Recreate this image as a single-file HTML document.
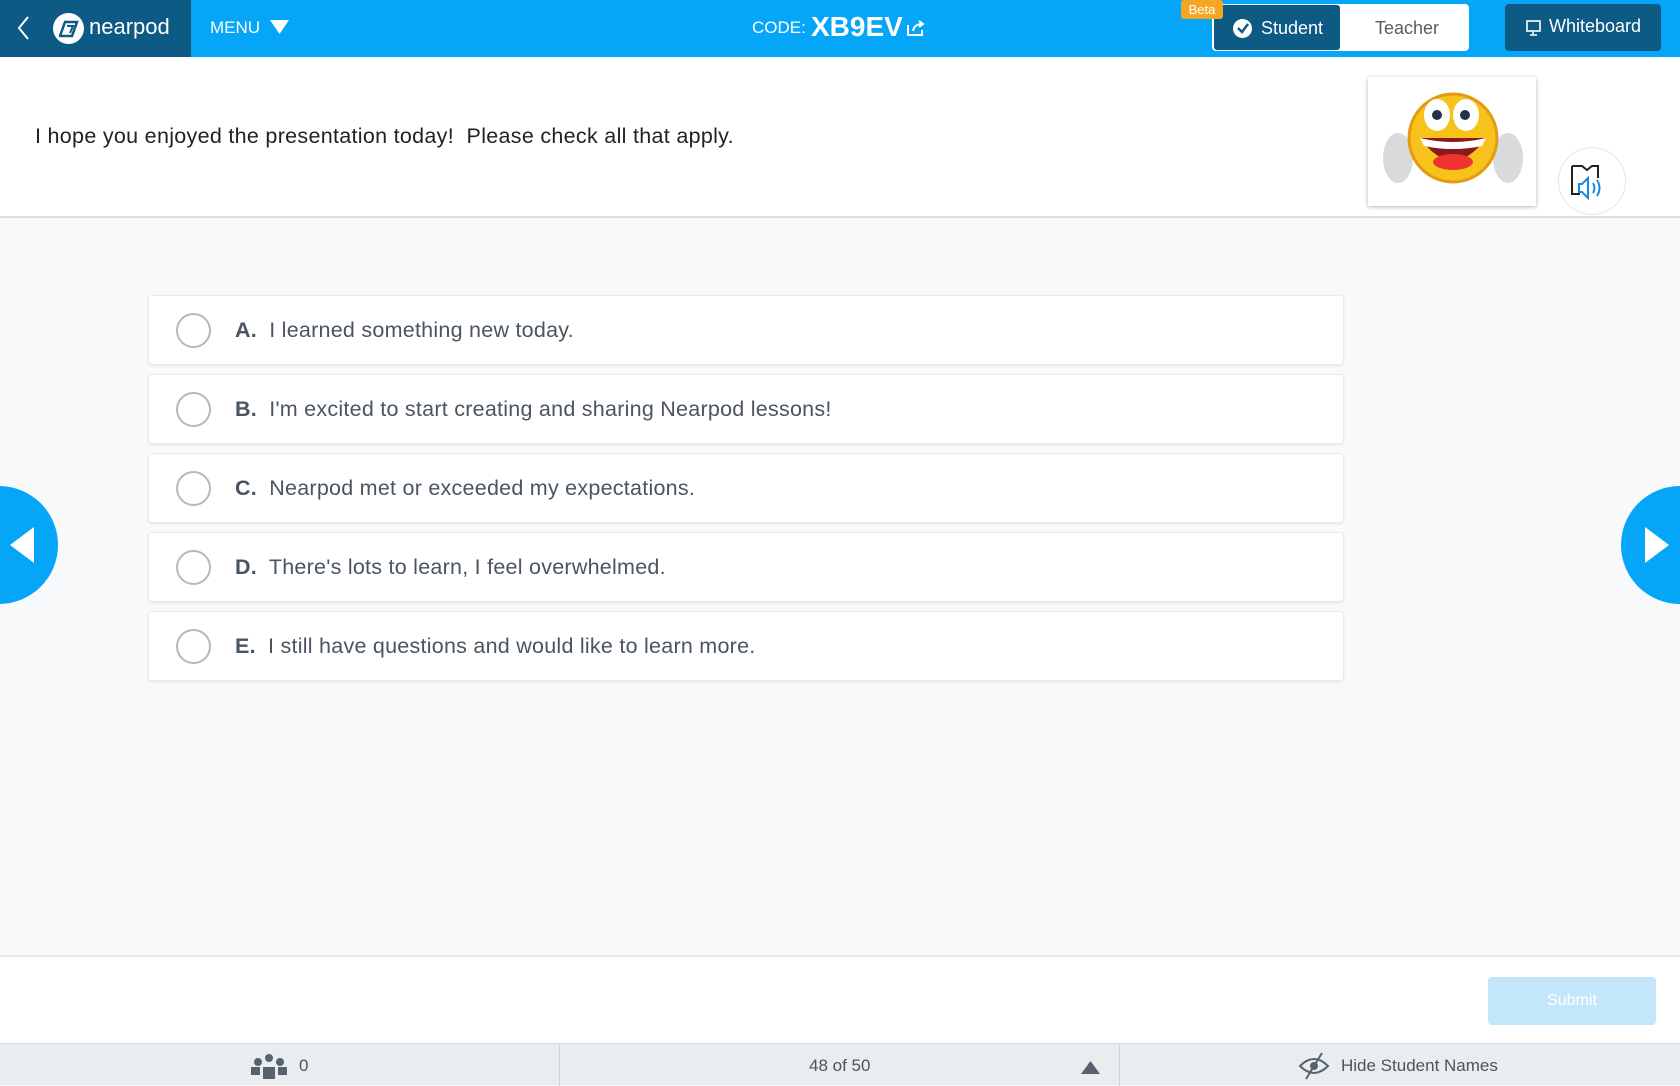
<!DOCTYPE html><html><head><style>
*{box-sizing:border-box;margin:0;padding:0}
body{width:1680px;height:1085px;overflow:hidden;background:#f7f9fb;font-family:"Liberation Sans",sans-serif;position:relative;color:#4a5560}
.hdr{position:absolute;left:0;top:0;width:1680px;height:57px;background:#05a6f8}
.logo{position:absolute;left:0;top:0;width:191px;height:57px;background:#0d5a85;color:#fff}
.abs{position:absolute}
.q{position:absolute;left:0;top:57px;width:1680px;height:161px;background:#fff;border-bottom:2px solid #dde1e5}
.opt{position:absolute;left:148px;width:1196px;height:70px;background:#fff;border:1px solid #e8ebee;border-radius:4px;box-shadow:0 1px 2px rgba(0,0,0,.08)}
.opt .c{position:absolute;left:27px;top:17px;width:35px;height:35px;border:2px solid #b4b8bc;border-radius:50%}
.opt .t{position:absolute;left:86px;top:22px;font-size:21.5px;letter-spacing:0.25px;color:#4a5560}
.opt b{color:#4a5560;margin-right:6px}
.bar{position:absolute;left:0;top:1043px;width:1680px;height:42px;background:#e9edf0;border-top:1px solid #d5d9dd;font-size:17px;color:#4a5560}
</style></head><body>
<div class="hdr"></div>
<div class="logo">
 <svg class="abs" style="left:16px;top:15px" width="16" height="26"><path d="M12 2 L3 13 L12 24" stroke="#fff" stroke-width="2" fill="none"/></svg>
 <div class="abs" style="left:53px;top:13px;width:31px;height:31px;border-radius:50%;background:#fff"></div>
 <svg class="abs" style="left:59px;top:20px" width="20" height="18"><path d="M6 2h12l-5 14H1z" stroke="#0d5a85" stroke-width="2.5" fill="none"/><path d="M8 6h6l-3 7" stroke="#0d5a85" stroke-width="2" fill="none"/></svg>
 <div class="abs" style="left:89px;top:14px;font-size:22px;">nearpod</div>
</div>
<div class="abs" style="left:210px;top:18px;color:#fff;font-size:17px">MENU</div>
<svg class="abs" style="left:270px;top:20px" width="20" height="15"><path d="M0 0h19L9.5 14z" fill="#fff"/></svg>
<div class="abs" style="left:752px;top:18px;color:#fff;font-size:17px">CODE:</div>
<div class="abs" style="left:811px;top:11px;color:#fff;font-size:28px;font-weight:bold">XB9EV</div>
<svg class="abs" style="left:906px;top:19px" width="20" height="18"><path d="M2 6v10h14v-5" stroke="#fff" stroke-width="2" fill="none"/><path d="M7 12c1-5 4-7 9-7M13 2l4 3-4 3" stroke="#fff" stroke-width="2" fill="none"/></svg>
<div class="abs" style="left:1212px;top:4px;width:257px;height:47px;background:#fff;border-radius:4px"></div>
<div class="abs" style="left:1214px;top:5px;width:126px;height:45px;background:#0d5a85;border-radius:3px"></div>
<div class="abs" style="left:1233px;top:19px;width:19px;height:19px;border-radius:50%;background:#fff"></div>
<svg class="abs" style="left:1237px;top:23px" width="12" height="11"><path d="M1 5l4 4 6-8" stroke="#0d5a85" stroke-width="2.5" fill="none"/></svg>
<div class="abs" style="left:1261px;top:18px;color:#fff;font-size:18px">Student</div>
<div class="abs" style="left:1375px;top:18px;color:#555d65;font-size:18px">Teacher</div>
<div class="abs" style="left:1181px;top:0;width:42px;height:19px;background:#f5a623;border-radius:3px;color:#fff;font-size:13px;text-align:center;line-height:19px">Beta</div>
<div class="abs" style="left:1505px;top:4px;width:156px;height:47px;background:#0d5a85;border-radius:4px"></div>
<svg class="abs" style="left:1526px;top:20px" width="16" height="16"><rect x="1" y="1" width="13" height="10" stroke="#fff" stroke-width="1.6" fill="none"/><path d="M7 11v4M4 15h7" stroke="#fff" stroke-width="1.5"/></svg>
<div class="abs" style="left:1549px;top:16px;color:#fff;font-size:18px">Whiteboard</div>

<div class="q"></div>
<div class="abs" style="left:35px;top:124px;font-size:21.5px;letter-spacing:0.3px;color:#222">I hope you enjoyed the presentation today!&nbsp; Please check all that apply.</div>
<div class="abs" style="left:1368px;top:77px;width:168px;height:129px;background:#fff;box-shadow:0 1px 4px rgba(0,0,0,.3)"></div>
<svg class="abs" style="left:1378px;top:88px" width="150" height="110">
<ellipse cx="20" cy="70" rx="15" ry="25" fill="#d8dadc"/><ellipse cx="130" cy="70" rx="15" ry="25" fill="#d8dadc"/>
<circle cx="75" cy="50" r="44" fill="#f7c21b" stroke="#e59a13" stroke-width="3"/>
<ellipse cx="59" cy="27" rx="13" ry="16" fill="#fff"/><ellipse cx="88" cy="27" rx="13" ry="16" fill="#fff"/>
<circle cx="59" cy="27" r="5" fill="#234"/><circle cx="87" cy="27" r="5" fill="#234"/>
<path d="M42 50 Q75 95 108 50 Z" fill="#8b1a1a"/><path d="M42 50 Q75 58 108 50 L104 58 Q75 64 46 58Z" fill="#fff"/><ellipse cx="75" cy="74" rx="20" ry="8" fill="#e33"/>
</svg>
<div class="abs" style="left:1558px;top:147px;width:68px;height:68px;border-radius:50%;background:#fff;border:1px solid #e2e5e8"></div>
<svg class="abs" style="left:1570px;top:162px" width="44" height="40"><path d="M2 4h10l5 4 5-4h6v12M2 4v28h8" stroke="#222" stroke-width="2" fill="none"/><path d="M18 36l-6-6h-3v-8h3l6-6z" stroke="#1a8ae0" stroke-width="2" fill="none"/><path d="M23 21q3 5 0 10M27 18q5 8 0 16" stroke="#1a8ae0" stroke-width="2" fill="none"/></svg>

<div class="opt" style="top:295px"><div class="c"></div><div class="t"><b>A.</b> I learned something new today.</div></div>
<div class="opt" style="top:374px"><div class="c"></div><div class="t"><b>B.</b> I'm excited to start creating and sharing Nearpod lessons!</div></div>
<div class="opt" style="top:453px"><div class="c"></div><div class="t"><b>C.</b> Nearpod met or exceeded my expectations.</div></div>
<div class="opt" style="top:532px"><div class="c"></div><div class="t"><b>D.</b> There's lots to learn, I feel overwhelmed.</div></div>
<div class="opt" style="top:611px"><div class="c"></div><div class="t"><b>E.</b> I still have questions and would like to learn more.</div></div>

<div class="abs" style="left:-60px;top:486px;width:118px;height:118px;border-radius:50%;background:#05a6f8"></div>
<svg class="abs" style="left:10px;top:527px" width="25" height="36"><path d="M24 0v36L0 18z" fill="#fff"/></svg>
<div class="abs" style="left:1621px;top:486px;width:118px;height:118px;border-radius:50%;background:#05a6f8"></div>
<svg class="abs" style="left:1645px;top:527px" width="25" height="36"><path d="M0 0v36l24-18z" fill="#fff"/></svg>

<div class="abs" style="left:0;top:955px;width:1680px;height:88px;background:#fff;border-top:2px solid #e6e9ec"></div>
<div class="abs" style="left:1488px;top:977px;width:168px;height:48px;background:#c4e6fb;border-radius:4px;color:#fff;font-size:16px;text-align:center;line-height:48px">Submit</div>
<div class="bar">
 <svg class="abs" style="left:249px;top:9px" width="40" height="26"><circle cx="20" cy="5" r="4" fill="#56626e"/><circle cx="9" cy="9" r="4" fill="#56626e"/><circle cx="31" cy="9" r="4" fill="#56626e"/><path d="M14 26v-12h12v12zM2 22v-8h9v8zM29 22v-8h9v8z" fill="#56626e"/></svg>
 <div class="abs" style="left:299px;top:12px">0</div>
 <div class="abs" style="left:559px;top:0;width:1px;height:42px;background:#cfd4d8"></div>
 <div class="abs" style="left:809px;top:12px">48 of 50</div>
 <svg class="abs" style="left:1081px;top:17px" width="19" height="14"><path d="M0 13h19L9.5 0z" fill="#56626e"/></svg>
 <div class="abs" style="left:1119px;top:0;width:1px;height:42px;background:#cfd4d8"></div>
 <svg class="abs" style="left:1298px;top:8px" width="32" height="28"><path d="M2 14q14-14 28 0q-14 14-28 0z" stroke="#56626e" stroke-width="2" fill="none"/><circle cx="16" cy="14" r="4" fill="#56626e"/><path d="M24 1L8 27" stroke="#56626e" stroke-width="2"/></svg>
 <div class="abs" style="left:1341px;top:12px">Hide Student Names</div>
</div>
</body></html>
